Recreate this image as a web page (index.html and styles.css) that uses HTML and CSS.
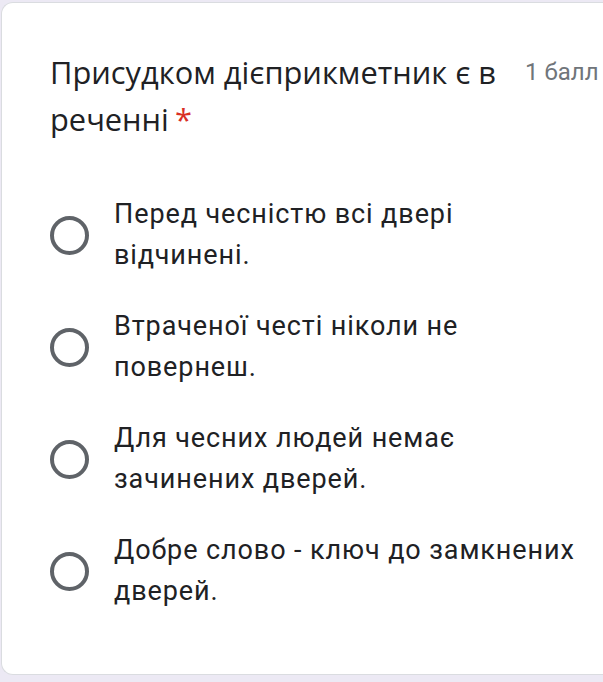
FILE: index.html
```html
<!DOCTYPE html>
<html lang="uk">
<head>
<meta charset="utf-8">
<title>Питання</title>
<link rel="stylesheet" href="styles.css">
</head>
<body>
<div class="card">
  <div class="header">
    <div class="title">Присудком дієприкметник є в реченні<span class="req">*</span></div>
    <div class="points">1 балл</div>
  </div>
  <div class="options">
    <div class="option"><span class="radio"></span><span class="label">Перед чесністю всі двері відчинені.</span></div>
    <div class="option"><span class="radio"></span><span class="label">Втраченої честі ніколи не повернеш.</span></div>
    <div class="option"><span class="radio"></span><span class="label">Для чесних людей немає зачинених дверей.</span></div>
    <div class="option"><span class="radio"></span><span class="label">Добре слово - ключ до замкнених дверей.</span></div>
  </div>
</div>
</body>
</html>
```
FILE: styles.css
```css
html, body {
  margin: 0;
  padding: 0;
  background: #ece9f4;
  overflow: hidden;
}
body {
  width: 603px;
  height: 682px;
  padding-top: 2px;
  padding-left: 1px;
  box-sizing: border-box;
}
.card {
  width: 640px;
  height: 673px;
  box-sizing: border-box;
  background: #ffffff;
  border: 1px solid #dadce0;
  border-right: none;
  border-radius: 12px 0 0 12px;
  padding: 46px 0 0 48px;
}
.header {
  display: flex;
  align-items: flex-start;
}
.title {
  width: 462px;
  font-family: "Open Sans", "Noto Sans", sans-serif;
  font-size: 30.8px;
  line-height: 47px;
  color: #202124;
}
.req {
  margin-left: 6px;
  color: #d93025;
}
.points {
  margin-left: 13px;
  font-family: Roboto, "Noto Sans", sans-serif;
  font-size: 24px;
  line-height: 47px;
  color: #70757a;
  white-space: nowrap;
}
.options {
  margin-top: 51px;
  display: flex;
  flex-direction: column;
  gap: 30px;
}
.option {
  display: flex;
  align-items: center;
}
.radio {
  flex: none;
  width: 39px;
  height: 39px;
  box-sizing: border-box;
  border: 4px solid #5f6368;
  border-radius: 50%;
  margin-right: 25px;
}
.label {
  width: 478px;
  font-family: Roboto, "Noto Sans", sans-serif;
  font-size: 27px;
  letter-spacing: 0.9px;
  line-height: 41px;
  color: #202124;
}
```
